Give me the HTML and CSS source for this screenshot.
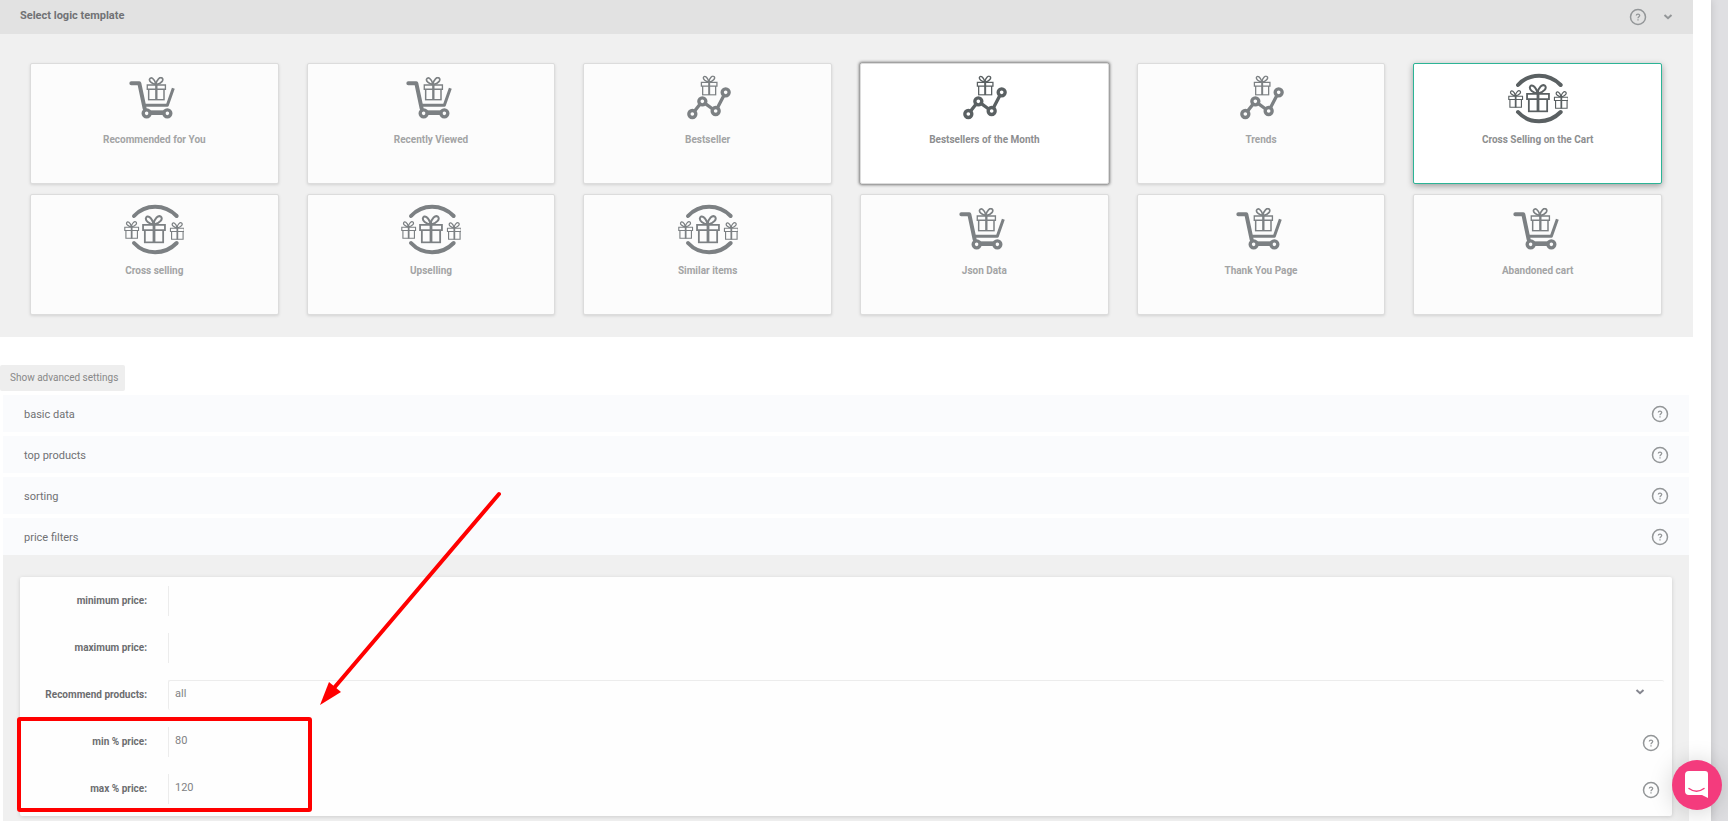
FILE: index.html
```html
<!DOCTYPE html>
<html lang="en">
<head>
<meta charset="utf-8">
<title>Logic template</title>
<link rel="stylesheet" href="styles.css">
</head>
<body>
<svg class="sprite" aria-hidden="true">
  <symbol id="gift" viewBox="0 0 60 72">
    <g fill="none" stroke="currentColor">
      <path stroke-width="4.500" d="M2.500 25H57.500V38H2.500ZM7 38V69H53V38"/>
      <path stroke-width="7" d="M30 24V70"/>
      <path stroke-width="5" d="M29 24C18 22 7 14 10 7C13 0 24 4 29 23C31 8 41 0 47 4C54 10 45 20 30 24"/>
    </g>
  </symbol>
  <symbol id="cart" viewBox="44 24 180 180">
    <g fill="none" stroke="currentColor" stroke-linejoin="round">
      <path stroke-width="12" stroke-linecap="round" d="M66 70H90L106 146"/>
      <path stroke-width="9" d="M104 136H174L192 85"/>
      <path stroke-width="14" d="M118 158H168"/>
      <circle cx="112" cy="160" r="10.500" stroke-width="10"/>
      <circle cx="174" cy="160" r="10.500" stroke-width="10"/>
    </g>
    <use href="#gift" x="111" y="50" width="60" height="72"/>
  </symbol>
  <symbol id="chart" viewBox="23 24 180 180">
    <g fill="none" stroke="currentColor">
      <path stroke-width="10" d="M73 153L90 131M105 131L127 147M141 144L161 106"/>
      <circle cx="66" cy="162" r="10.500" stroke-width="10"/>
      <circle cx="96" cy="124" r="10.500" stroke-width="10"/>
      <circle cx="136" cy="153" r="10.500" stroke-width="10"/>
      <circle cx="166" cy="97" r="10.500" stroke-width="10"/>
    </g>
    <use href="#gift" x="88" y="46" width="57" height="61"/>
  </symbol>
  <symbol id="cross" viewBox="82 24 180 180">
    <g fill="none" stroke="currentColor" stroke-width="12" stroke-linecap="round">
      <path d="M112 75C146 38 204 38 240 75"/>
      <path d="M112 156C146 193 204 193 240 156"/>
    </g>
    <use href="#gift" x="136" y="72" width="72" height="86"/>
    <use href="#gift" x="80" y="90" width="50" height="54"/>
    <use href="#gift" x="217" y="93" width="50" height="54"/>
  </symbol>
  <symbol id="help" viewBox="0 0 18 18">
    <circle cx="9" cy="9" r="7.500" fill="none" stroke="currentColor" stroke-width="1.500"/>
    <path fill="none" stroke="currentColor" stroke-width="1.300" d="M7.300 7.600C7.300 5.700 10.700 5.700 10.700 7.500C10.700 8.700 9 8.700 9 10.200M9 11.200V12.500"/>
  </symbol>
  <symbol id="chevron" viewBox="0 0 10 8">
    <path fill="none" stroke="currentColor" stroke-width="2" d="M1.500 2L5 5.200L8.500 2"/>
  </symbol>
</svg>

<main class="page">
  <section class="templates">
    <header class="templates-head">
      <h1 class="templates-title">Select logic template</h1>
      <button class="icon-btn" type="button" aria-label="Help"><svg class="help-icon"><use href="#help"/></svg></button>
      <button class="icon-btn" type="button" aria-label="Collapse"><svg class="chevron-icon"><use href="#chevron"/></svg></button>
    </header>
    <div class="cards">
      <button class="card" type="button"><svg class="card-icon"><use href="#cart"/></svg><span>Recommended for You</span></button>
      <button class="card" type="button"><svg class="card-icon"><use href="#cart"/></svg><span>Recently Viewed</span></button>
      <button class="card" type="button"><svg class="card-icon"><use href="#chart"/></svg><span>Bestseller</span></button>
      <button class="card card-focus" type="button"><svg class="card-icon"><use href="#chart"/></svg><span>Bestsellers of the Month</span></button>
      <button class="card" type="button"><svg class="card-icon"><use href="#chart"/></svg><span>Trends</span></button>
      <button class="card card-selected" type="button"><svg class="card-icon"><use href="#cross"/></svg><span>Cross Selling on the Cart</span></button>
      <button class="card" type="button"><svg class="card-icon"><use href="#cross"/></svg><span>Cross selling</span></button>
      <button class="card" type="button"><svg class="card-icon"><use href="#cross"/></svg><span>Upselling</span></button>
      <button class="card" type="button"><svg class="card-icon"><use href="#cross"/></svg><span>Similar items</span></button>
      <button class="card" type="button"><svg class="card-icon"><use href="#cart"/></svg><span>Json Data</span></button>
      <button class="card" type="button"><svg class="card-icon"><use href="#cart"/></svg><span>Thank You Page</span></button>
      <button class="card" type="button"><svg class="card-icon"><use href="#cart"/></svg><span>Abandoned cart</span></button>
    </div>
  </section>

  <button class="advanced" type="button">Show advanced settings</button>

  <div class="accordion">
    <div class="bar"><button class="bar-title" type="button">basic data</button><button class="icon-btn" type="button" aria-label="Help"><svg class="help-icon"><use href="#help"/></svg></button></div>
    <div class="bar"><button class="bar-title" type="button">top products</button><button class="icon-btn" type="button" aria-label="Help"><svg class="help-icon"><use href="#help"/></svg></button></div>
    <div class="bar"><button class="bar-title" type="button">sorting</button><button class="icon-btn" type="button" aria-label="Help"><svg class="help-icon"><use href="#help"/></svg></button></div>
    <div class="bar"><button class="bar-title" type="button">price filters</button><button class="icon-btn" type="button" aria-label="Help"><svg class="help-icon"><use href="#help"/></svg></button></div>
  </div>

  <div class="filters">
    <form class="form">
      <div class="row"><label class="label" for="min">minimum price:</label><input class="field" id="min" type="text"></div>
      <div class="row"><label class="label" for="max">maximum price:</label><input class="field" id="max" type="text"></div>
      <div class="row"><label class="label" for="rec">Recommend products:</label>
        <div class="select-wrap"><select class="field field-select" id="rec"><option>all</option></select><svg class="select-arrow chevron-icon"><use href="#chevron"/></svg></div></div>
      <div class="row"><label class="label" for="minp">min % price:</label><input class="field" id="minp" type="text" value="80"><button class="icon-btn row-help" type="button" aria-label="Help"><svg class="help-icon"><use href="#help"/></svg></button></div>
      <div class="row"><label class="label" for="maxp">max % price:</label><input class="field" id="maxp" type="text" value="120"><button class="icon-btn row-help" type="button" aria-label="Help"><svg class="help-icon"><use href="#help"/></svg></button></div>
      <svg class="callout" viewBox="0 0 500 330" aria-hidden="true">
        <rect x="3" y="236" width="291" height="91" rx="1" fill="none" stroke="#f00" stroke-width="4"/>
        <path d="M483 11L318 205" stroke="#f00" stroke-width="4" stroke-linecap="round"/>
        <path d="M304 222L313 199L325 209Z" fill="#f00"/>
      </svg>
    </form>
  </div>
</main>

<button class="chat" type="button" aria-label="Open chat">
  <svg class="chat-icon" viewBox="0 0 24 28"><path fill="#fff" d="M4 0H20Q23 0 23 3V27L17 24H4Q0 24 0 20V4Q0 0 4 0Z"/><path fill="none" stroke="#f43b7d" stroke-width="1.500" stroke-linecap="round" d="M4 17.500Q11.500 23 19 17.500"/></svg>
</button>
</body>
</html>
```
FILE: styles.css
```css
* { box-sizing: border-box; }

body {
  margin: 0;
  background: #dfdfe2;
  font-family: Roboto, "Liberation Sans", sans-serif;
  font-size: 11px;
  line-height: 16px;
  color: #707174;
}

button, input, select { font: inherit; color: inherit; }

.sprite { position: absolute; width: 0; height: 0; }

.page {
  display: flex;
  flex-direction: column;
  min-height: 100vh;
  margin-right: 17px;
  background: #fff;
  box-shadow: 0 0 8px rgba(0, 0, 0, 0.15);
}

.templates {
  margin-right: 18px;
  background: #f0f0f0;
}

.templates-head {
  display: flex;
  align-items: center;
  gap: 16px;
  height: 34px;
  padding: 0 20px;
  background: #e2e2e2;
}

.templates-title {
  flex: 1;
  margin: 0 0 2px;
  font-size: 11px;
  font-weight: 700;
  color: #717275;
}

.icon-btn {
  display: flex;
  padding: 0;
  border: 0;
  background: none;
  color: #939698;
}

.help-icon { width: 18px; height: 18px; }
.chevron-icon { width: 10px; height: 8px; }

.cards {
  display: grid;
  grid-template-columns: repeat(6, 1fr);
  gap: 10px 28px;
  padding: 29px 31px 22px 30px;
}

.card {
  display: flex;
  flex-direction: column;
  align-items: center;
  gap: 4px;
  height: 121px;
  padding: 4px 0 0;
  border: 1px solid #dcdcdc;
  border-radius: 2px;
  background: #fcfcfc;
  box-shadow: 0 1px 3px rgba(0, 0, 0, 0.12);
  font-size: 10px;
  font-weight: 700;
  color: #a3a4a5;
}

.card-icon { width: 60px; height: 60px; color: #7c8083; }

.card-focus,
.card-selected { background: #fff; color: #8d8e8f; }

.card-focus .card-icon,
.card-selected .card-icon { color: #5a6062; }

.card-focus { box-shadow: 0 0 3px 1px #777; }

.card-selected {
  border-color: #2cb496;
  box-shadow: 0 2px 6px rgba(0, 0, 0, 0.35);
}

.advanced {
  align-self: flex-start;
  height: 26px;
  margin-top: 28px;
  padding: 0 7px 0 10px;
  border: 0;
  border-radius: 2px;
  background: #eee;
  font-size: 10px;
  color: #888;
}

.accordion {
  display: flex;
  flex-direction: column;
  gap: 4px;
  margin: 4px 22px 0 3px;
}

.bar {
  display: flex;
  align-items: center;
  height: 37px;
  padding-right: 20px;
  background: #fafbfd;
}

.bar-title {
  flex: 1;
  height: 37px;
  padding: 2px 0 0 21px;
  border: 0;
  background: none;
  text-align: left;
}

.filters {
  flex: 1;
  margin: 0 22px 0 3px;
  padding: 22px 17px 4px;
  background: #f0f0f0;
}

.form {
  position: relative;
  padding-bottom: 4px;
  border-radius: 2px;
  background: #fefefe;
  box-shadow: 0 1px 4px rgba(0, 0, 0, 0.15);
}

.row {
  display: flex;
  align-items: center;
  height: 47px;
  padding-right: 8px;
}

.label {
  width: 127px;
  margin-right: 21px;
  font-size: 10px;
  font-weight: 700;
  text-align: right;
  color: #6c6d70;
}

.field {
  flex: 1;
  height: 30px;
  padding: 0 0 3px 6px;
  border: 0;
  border-left: 1px solid #ececec;
  background: transparent;
  color: #818284;
}

.select-wrap {
  position: relative;
  display: flex;
  flex: 1;
}

.field-select {
  appearance: none;
  border-top: 1px solid #ececec;
  border-radius: 2px;
}

.select-arrow {
  position: absolute;
  top: 8px;
  right: 19px;
  color: #85868f;
}

.row-help { margin: 3px 4px 0 0; }

.callout {
  position: absolute;
  top: -94px;
  left: -4px;
  width: 500px;
  height: 330px;
  pointer-events: none;
}

.chat {
  position: fixed;
  right: 6px;
  bottom: 11px;
  display: flex;
  align-items: center;
  justify-content: center;
  width: 50px;
  height: 50px;
  padding: 0;
  border: 0;
  border-radius: 50%;
  background: #f43b7d;
  box-shadow: 0 2px 24px rgba(0, 0, 0, 0.18);
}

.chat-icon { width: 24px; height: 28px; }
```
